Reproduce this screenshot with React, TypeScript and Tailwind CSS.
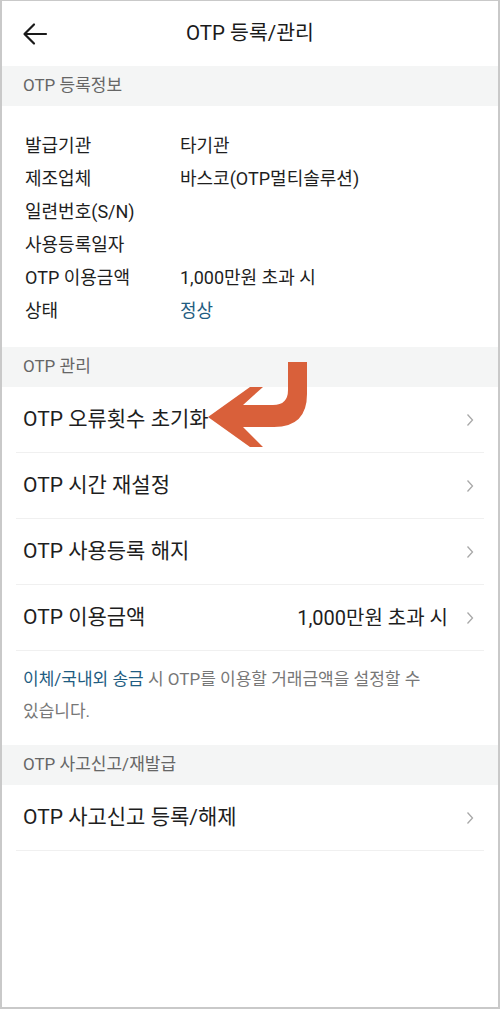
import React from "react";

const font = { fontFamily: 'Roboto, "Noto Sans CJK KR", sans-serif' };

function Chevron() {
  return (
    <svg width="8" height="14" viewBox="0 0 8 14" className="shrink-0">
      <path d="M1.5 1.5 L6.5 7 L1.5 12.5" fill="none" stroke="#a8a8a8" strokeWidth="1.3" />
    </svg>
  );
}

function SectionHeader({ children }: { children: React.ReactNode }) {
  return (
    <div className="h-[40px] bg-[#f4f5f5] flex items-center pl-[21px] text-[17px] text-[#666]">
      {children}
    </div>
  );
}

function MenuRow({ label, value }: { label: string; value?: string }) {
  return (
    <div className="mx-[14px] h-[66px] flex items-center border-b border-[#f0f0f0] pl-[7px] pr-[10px]">
      <span className="flex-1 text-[21px] text-[#1e1e1e]">{label}</span>
      {value && <span className="text-[20px] text-[#1e1e1e] mr-[18px]">{value}</span>}
      <Chevron />
    </div>
  );
}

const info: [string, string, boolean?][] = [
  ["발급기관", "타기관"],
  ["제조업체", "바스코(OTP멀티솔루션)"],
  ["일련번호(S/N)", ""],
  ["사용등록일자", ""],
  ["OTP 이용금액", "1,000만원 초과 시"],
  ["상태", "정상", true],
];

export default function App() {
  return (
    <div
      style={font}
      className="relative w-[500px] h-[1009px] bg-white border-x-2 border-b-2 border-t border-[#c9c9c9] overflow-hidden"
    >
      <div className="relative h-[65px] flex items-center justify-center">
        <svg className="absolute left-[20px] top-[21px]" width="26" height="24" viewBox="0 0 26 24">
          <path d="M24 12 H3 M12 2.5 L2.5 12 L12 21.5" fill="none" stroke="#1a1a1a" strokeWidth="2.2" strokeLinecap="round" strokeLinejoin="round" />
        </svg>
        <span className="text-[20.5px] text-[#1a1a1a]">OTP 등록/관리</span>
      </div>

      <SectionHeader>OTP 등록정보</SectionHeader>
      <div className="pt-[23px] pb-[20px]">
        {info.map(([k, v, blue]) => (
          <div key={k} className="h-[33px] flex items-center pl-[23px] text-[18px] text-[#1e1e1e]">
            <span className="w-[155px]">{k}</span>
            <span className={blue ? "text-[#1f5d82]" : ""}>{v}</span>
          </div>
        ))}
      </div>

      <SectionHeader>OTP 관리</SectionHeader>
      <MenuRow label="OTP 오류횟수 초기화" />
      <MenuRow label="OTP 시간 재설정" />
      <MenuRow label="OTP 사용등록 해지" />
      <MenuRow label="OTP 이용금액" value="1,000만원 초과 시" />
      <div className="h-[94px] pl-[21px] pr-[70px] pt-[12px] text-[17px] leading-[32px] text-[#777]">
        <span className="text-[#1f5d82]">이체/국내외 송금</span> 시 OTP를 이용할 거래금액을 설정할 수 있습니다.
      </div>

      <SectionHeader>OTP 사고신고/재발급</SectionHeader>
      <MenuRow label="OTP 사고신고 등록/해제" />

      <svg className="absolute left-[-2px] top-[-1px] pointer-events-none" width="500" height="1009" viewBox="0 0 500 1009">
        <path
          d="M288 362 L307 362 L307 394 Q307 427 274 427 L243 427 L263 447 L250 447 L208 417 L250 387 L263 387 L243 405 L273 405 Q288 405 288 390 Z"
          fill="#d9603a"
        />
      </svg>
    </div>
  );
}
